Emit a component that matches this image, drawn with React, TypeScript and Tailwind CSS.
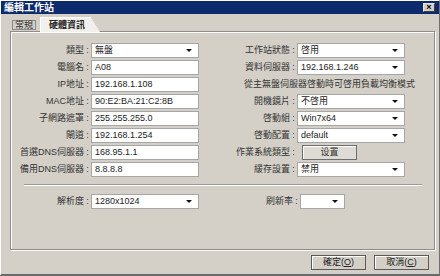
import React from "react";

const FONT = "font-['Liberation_Sans','Noto_Sans_CJK_TC',sans-serif]";

function Arrow() {
  return (
    <svg width="6" height="3" viewBox="0 0 6 3" className="ml-auto mr-[6px] shrink-0">
      <path d="M0 0h6L3 3z" fill="#111" />
    </svg>
  );
}

function Field({ value, select, w = "w-[108px]" }: { value: string; select?: boolean; w?: string }) {
  return (
    <div className={`flex h-[15px] ${w} items-center border border-[#a6a6a6] bg-white pl-[3px] text-[#222]`}>
      <span className="whitespace-nowrap">{value}</span>
      {select && <Arrow />}
    </div>
  );
}

function Row({ label, lw, children }: { label: string; lw: string; children: React.ReactNode }) {
  return (
    <div className="flex h-[17px] items-center">
      <span className={`${lw} whitespace-nowrap text-right`}>{label}</span>
      <span className="w-[7px] text-center">:</span>
      {children}
    </div>
  );
}

const left: [string, string, boolean][] = [
  ["類型", "無盤", true],
  ["電腦名", "A08", false],
  ["IP地址", "192.168.1.108", false],
  ["MAC地址", "90:E2:BA:21:C2:8B", false],
  ["子網路遮罩", "255.255.255.0", false],
  ["閘道", "192.168.1.254", false],
  ["首選DNS伺服器", "168.95.1.1", false],
  ["備用DNS伺服器", "8.8.8.8", false],
];

export default function App() {
  return (
    <div
      className={`${FONT} flex h-[276px] w-[440px] flex-col overflow-hidden border-t border-l border-t-white border-l-white border-r border-r-[#707070] border-b-2 border-b-[#6a6a6a] bg-[#d4d0c8] text-[9px] text-[#333]`}
    >
      {/* title bar */}
      <div className="flex h-[13px] shrink-0 items-center justify-between bg-[#0c2a6c] pl-[3px] pr-[4px]">
        <span className="text-[10px] font-bold leading-none text-white">編輯工作站</span>
        <div className="flex h-[9px] w-[12px] items-center justify-center border border-[#e8e8e8] border-r-[#404040] border-b-[#404040] bg-[#d4d0c8] text-[9px] font-bold leading-none text-black">
          ×
        </div>
      </div>

      {/* tabs */}
      <div className="flex h-[17px] shrink-0 items-end gap-[4px] pl-[11px]">
        <div className="mb-px flex h-[10px] items-center border border-[#8a8a8a] px-[2px] leading-none text-[#333]">
          常規
        </div>
        <div className="relative z-10 -mb-px flex h-[15px] w-[60px] items-center bg-[#f1f0ec] pl-[8px] font-bold leading-none text-[#222] [clip-path:polygon(0_0,84%_0,100%_100%,0_100%)] border-l border-t border-white">
          硬體資訊
        </div>
      </div>

      {/* panel */}
      <div className="mr-[4px] ml-[9px] h-[219px] shrink-0 border border-[#8c8c8c] pt-[10px] shadow-[inset_1px_1px_0_#fff,1px_1px_0_#fff]">
        <div className="flex">
          <div className="flex w-[188px] flex-col">
            {left.map(([l, v, s]) => (
              <Row key={l} label={l} lw="w-[73px]">
                <Field value={v} select={s} />
              </Row>
            ))}
          </div>
          <div className="flex flex-col">
            <Row label="工作站狀態" lw="w-[91px]">
              <Field value="啓用" select />
            </Row>
            <Row label="資料伺服器" lw="w-[91px]">
              <Field value="192.168.1.246" select />
            </Row>
            <div className="flex h-[17px] items-center whitespace-nowrap pl-[45px]">從主無盤伺服器啓動時可啓用負載均衡模式</div>
            <Row label="開機鏡片" lw="w-[91px]">
              <Field value="不啓用" select />
            </Row>
            <Row label="啓動組" lw="w-[91px]">
              <Field value="Win7x64" select />
            </Row>
            <Row label="啓動配置" lw="w-[91px]">
              <Field value="default" select />
            </Row>
            <Row label="作業系統類型" lw="w-[91px]">
              <button className="ml-[5px] flex h-[15px] w-[55px] items-center justify-center border border-[#6e6e6e] bg-[#dedbd4] text-[#333] shadow-[inset_1px_1px_0_#fff]">
                设置
              </button>
            </Row>
            <Row label="緩存設置" lw="w-[91px]">
              <Field value="禁用" select />
            </Row>
          </div>
        </div>

        <div className="mt-[6px] mr-[12px] ml-[13px] h-[2px] border-t border-b border-t-[#9a9a9a] border-b-white" />

        <div className="mt-[7px] flex">
          <div className="w-[188px]">
            <Row label="解析度" lw="w-[73px]">
              <Field value="1280x1024" select />
            </Row>
          </div>
          <Row label="刷新率" lw="w-[94px]">
            <Field value="" select w="w-[45px]" />
          </Row>
        </div>
      </div>

      {/* footer */}
      <div className="flex justify-end gap-[8px] pt-[5px] pr-[10px]">
        <button className="flex h-[15px] w-[55px] items-center justify-center border border-[#5a5a5a] bg-[#d4d0c8] text-[#222] shadow-[inset_1px_1px_0_#fff]">
          確定(<span className="underline">O</span>)
        </button>
        <button className="flex h-[15px] w-[55px] items-center justify-center border border-[#5a5a5a] bg-[#d4d0c8] text-[#222] shadow-[inset_1px_1px_0_#fff]">
          取消(<span className="underline">C</span>)
        </button>
      </div>
    </div>
  );
}
